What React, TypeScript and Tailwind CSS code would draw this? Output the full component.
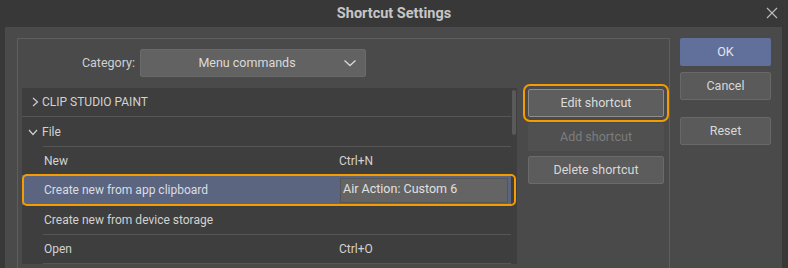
import { ReactNode } from "react";

const rows = [
  { label: "New", key: "Ctrl+N" },
  { label: "Create new from app clipboard", key: "Air Action: Custom 6", selected: true },
  { label: "Create new from device storage", key: "" },
  { label: "Open", key: "Ctrl+O" },
];

function Chevron({ open }: { open?: boolean }) {
  return (
    <svg width="10" height="10" viewBox="0 0 10 10" className="text-[#cfcfcf]">
      {open ? (
        <path d="M1 3 L5 7.5 L9 3" fill="none" stroke="currentColor" strokeWidth="1.2" />
      ) : (
        <path d="M3 1 L7.5 5 L3 9" fill="none" stroke="currentColor" strokeWidth="1.2" />
      )}
    </svg>
  );
}

function SideButton({ children, className }: { children: ReactNode; className?: string }) {
  return (
    <div
      className={`flex h-[28px] items-center justify-center rounded-[2px] text-[12.5px] ${className ?? ""}`}
    >
      {children}
    </div>
  );
}

function App() {
  return (
    <div
      className="flex h-[268px] w-[788px] flex-col overflow-hidden bg-[#383838] text-[#d2d2d2]"
      style={{ fontFamily: "Roboto, 'Noto Sans', sans-serif" }}
    >
      {/* title bar */}
      <div className="relative flex h-[27px] shrink-0 items-center justify-center">
        <span className="text-[14.5px] font-bold text-[#c6c6c6]">Shortcut Settings</span>
        <svg
          width="12"
          height="12"
          viewBox="0 0 12 12"
          className="absolute right-[10px] top-[7px] text-[#bdbdbd]"
        >
          <path d="M1 1 L11 11 M11 1 L1 11" stroke="currentColor" strokeWidth="1.1" />
        </svg>
      </div>

      {/* body */}
      <div className="mx-[5px] mr-[6px] flex flex-1 bg-[#4a4a4a] pl-[12px] pt-[11px]">
        <div className="flex w-[653px] flex-col border-l border-t border-r border-[#5e5e5e] pl-[4px] pr-[5px]">
          {/* category */}
          <div className="mt-[10px] flex h-[28px] items-center">
            <span className="w-[118px] pr-[5px] text-right text-[12.5px] text-[#d0d0d0]">Category:</span>
            <div className="flex h-[28px] w-[226px] items-center rounded-[2px] border border-[#6a6a6a] bg-[#626262] pl-[10px] pr-[8px]">
              <span className="flex-1 text-center text-[12.5px] text-[#dadada]">Menu commands</span>
              <svg width="14" height="10" viewBox="0 0 14 10" className="text-[#d8d8d8]">
                <path d="M1.5 2.5 L7 7.5 L12.5 2.5" fill="none" stroke="currentColor" strokeWidth="1.3" />
              </svg>
            </div>
          </div>

          <div className="mt-[11px] flex">
            {/* list */}
            <div className="flex w-[495px] bg-[#3e3e3e]">
              <div className="flex w-[489px] flex-col">
                <div className="flex h-[29px] items-center border-b border-[#565656] pl-[8px] text-[12px]">
                  <Chevron />
                  <span className="ml-[2px]">CLIP STUDIO PAINT</span>
                </div>
                <div className="flex h-[29px] items-center pl-[6px] text-[12px]">
                  <Chevron open />
                  <span className="ml-[4px]">File</span>
                </div>
                {rows.map((r, i) =>
                  r.selected ? (
                    <div key={i} className="relative flex h-[30px] items-center bg-[#5b6580] text-[12px]">
                      <span className="w-[318px] pl-[22px] text-[#dadde4]">{r.label}</span>
                      <div className="flex h-[25px] w-[168px] items-start border border-[#565656] bg-[#646464] pl-[2px] pt-[1px] text-[12.5px] text-[#e0e0e0]">
                        {r.key}
                      </div>
                      <div className="absolute -top-[1px] bottom-[-1px] left-0 right-[-5px] rounded-[5px] border-2 border-[#f59c00]" />
                    </div>
                  ) : (
                    <div key={i} className="ml-[21px] flex h-[29px] items-center border-t border-[#565656] text-[12px]">
                      <span className="w-[296px] pl-[1px]">{r.label}</span>
                      <span>{r.key}</span>
                    </div>
                  ),
                )}
                <div className="ml-[21px] border-t border-[#565656]" />
              </div>
              <div className="flex w-[6px] justify-center pt-[2px]">
                <div className="h-[45px] w-[4px] rounded-[2px] bg-[#5a5a5a]" />
              </div>
            </div>

            {/* shortcut buttons */}
            <div className="ml-[11px] mt-[1px] flex w-[136px] flex-col">
              <SideButton className="border border-[#8e8e8e] bg-[#5e5e5e] text-[#dcdcdc] outline-2 outline-offset-[3px] outline-[#f59c00]">
                Edit shortcut
              </SideButton>
              <SideButton className="mt-[6px] bg-[#505050] text-[#7d7d7d]">Add shortcut</SideButton>
              <SideButton className="mt-[5px] border border-[#6a6a6a] bg-[#5c5c5c] text-[#d8d8d8]">
                Delete shortcut
              </SideButton>
            </div>
          </div>
        </div>

        {/* dialog buttons */}
        <div className="ml-[10px] flex w-[91px] flex-col">
          <SideButton className="bg-[#61709a] text-[#e4e6ee]">OK</SideButton>
          <SideButton className="mt-[6px] border border-[#686868] bg-[#5a5a5a] text-[#d8d8d8]">Cancel</SideButton>
          <SideButton className="mt-[17px] border border-[#686868] bg-[#5a5a5a] text-[#d8d8d8]">Reset</SideButton>
        </div>
      </div>
    </div>
  );
}

export default App;
